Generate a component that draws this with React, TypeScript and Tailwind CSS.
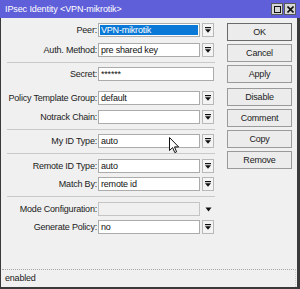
import React from "react";

const FONT = "font-['Liberation_Sans',Arial,sans-serif]";

function DropIcon() {
  return (
    <svg width="6" height="6" viewBox="0 0 6 6">
      <rect x="0" y="0" width="6" height="1.2" fill="#111" />
      <polygon points="0,2.2 6,2.2 3,5.8" fill="#111" />
    </svg>
  );
}

function DropBtn() {
  return (
    <div className="ml-[2px] w-[12px] h-[14px] border border-[#b8b8b8] bg-[#f4f4f4] flex items-center justify-center">
      <DropIcon />
    </div>
  );
}

type RowProps = {
  label: string;
  value?: string;
  kind: "drop" | "full" | "disabled";
  selected?: boolean;
  mt: string;
};

function Row({ label, value = "", kind, selected, mt }: RowProps) {
  return (
    <div className={`flex items-center h-[14px] ${mt}`}>
      <div className="w-[97px] pr-[1px] text-right text-[#1b1b1b] leading-none whitespace-nowrap">
        {label}
      </div>
      {kind === "full" && (
        <div className="w-[116px] h-[14px] border border-[#ababab] bg-white flex items-center px-[2px] leading-none text-[#111]">
          {value}
        </div>
      )}
      {kind === "drop" && (
        <>
          <div
            className={`w-[102px] h-[14px] border border-[#ababab] flex items-center leading-none ${
              selected ? "bg-white p-[1px]" : "bg-white px-[2px] text-[#111]"
            }`}
          >
            {selected ? (
              <div className="w-full h-full bg-[#0a78d7] text-white flex items-center px-[1px]">{value}</div>
            ) : (
              value
            )}
          </div>
          <DropBtn />
        </>
      )}
      {kind === "disabled" && (
        <>
          <div className="w-[102px] h-[14px] border border-[#c4c4c4] bg-[#f0f0f0]" />
          <div className="ml-[2px] w-[12px] h-[14px] flex items-center justify-center">
            <svg width="7" height="5" viewBox="0 0 7 5">
              <polygon points="0.5,0.5 6.5,0.5 3.5,4.4" fill="#111" />
            </svg>
          </div>
        </>
      )}
    </div>
  );
}

function Sep({ mt }: { mt: string }) {
  return <div className={`ml-[6px] w-[208px] h-[1px] bg-[#c9c9c9] ${mt}`} />;
}

function Btn({ label, mt, def }: { label: string; mt: string; def?: boolean }) {
  return (
    <div
      className={`h-[18px] w-[65px] ${mt} border ${
        def ? "border-[#6a6a6a]" : "border-[#9a9a9a]"
      } bg-[#ececec] flex items-center justify-center text-[#1b1b1b] leading-none`}
    >
      {label}
    </div>
  );
}

export default function App() {
  return (
    <div className={`relative w-[300px] h-[289px] flex flex-col bg-[#f0f0f0] text-[9px] tracking-[-0.2px] ${FONT}`}>
      {/* title bar */}
      <div className="h-[18px] bg-[#5f5fd9] flex items-center pl-[5px] pr-[4px]">
        <div className="text-white text-[9px] tracking-[-0.1px] leading-none flex-1 whitespace-nowrap">
          IPsec Identity &lt;VPN-mikrotik&gt;
        </div>
        <div className="flex gap-[1px]">
          <div className="w-[12px] h-[12px] bg-[#d6d6d6] border border-[#5a5a5a] flex items-center justify-center">
            <div className="w-[7px] h-[7px] border border-[#111]" />
          </div>
          <div className="w-[12px] h-[12px] bg-[#d6d6d6] border border-[#5a5a5a] flex items-center justify-center">
            <svg width="7" height="7" viewBox="0 0 7 7">
              <path d="M0.5 0.5 L6.5 6.5 M6.5 0.5 L0.5 6.5" stroke="#111" strokeWidth="1.6" />
            </svg>
          </div>
        </div>
      </div>

      {/* body */}
      <div className="flex-1 flex flex-col border-l border-l-[#3a3a3a] border-r-[3px] border-r-[#3a3a3a] border-b-2 border-b-[#3a3a3a]">
        <div className="flex-1 flex">
          {/* form */}
          <div className="w-[226px] flex flex-col pt-[5px]">
            <Row label="Peer:" value="VPN-mikrotik" kind="drop" selected mt="" />
            <Row label="Auth. Method:" value="pre shared key" kind="drop" mt="mt-[6px]" />
            <Sep mt="mt-[5px]" />
            <Row label="Secret:" value="******" kind="full" mt="mt-[4px]" />
            <Row label="Policy Template Group:" value="default" kind="drop" mt="mt-[10px]" />
            <Row label="Notrack Chain:" value="" kind="drop" mt="mt-[5px]" />
            <Sep mt="mt-[5px]" />
            <Row label="My ID Type:" value="auto" kind="drop" mt="mt-[4px]" />
            <Sep mt="mt-[5px]" />
            <Row label="Remote ID Type:" value="auto" kind="drop" mt="mt-[5px]" />
            <Row label="Match By:" value="remote id" kind="drop" mt="mt-[4px]" />
            <Sep mt="mt-[5px]" />
            <Row label="Mode Configuration:" kind="disabled" mt="mt-[5px]" />
            <Row label="Generate Policy:" value="no" kind="drop" mt="mt-[4px]" />
          </div>
          {/* buttons */}
          <div className="w-[65px] flex flex-col pt-[5px]">
            <Btn label="OK" mt="" def />
            <Btn label="Cancel" mt="mt-[3px]" />
            <Btn label="Apply" mt="mt-[3px]" />
            <Btn label="Disable" mt="mt-[5px]" />
            <Btn label="Comment" mt="mt-[3px]" />
            <Btn label="Copy" mt="mt-[3px]" />
            <Btn label="Remove" mt="mt-[3px]" />
          </div>
        </div>
        {/* status bar */}
        <div className="h-[18px] mx-[1px] border-t border-t-[#a6a6a6] border-r border-r-[#d0d0d0] border-dotted flex items-center pl-[3px] text-[#1b1b1b] leading-none">
          enabled
        </div>
      </div>

      {/* mouse cursor */}
      <svg className="absolute left-[169px] top-[137px]" width="11" height="17" viewBox="0 0 11 17">
        <path
          d="M0.5 0.5 L0.5 13.5 L3.6 10.6 L5.8 15.6 L7.6 14.8 L5.5 9.9 L9.6 9.9 Z"
          fill="#fff"
          stroke="#111"
          strokeWidth="1"
          strokeLinejoin="round"
        />
      </svg>
    </div>
  );
}
